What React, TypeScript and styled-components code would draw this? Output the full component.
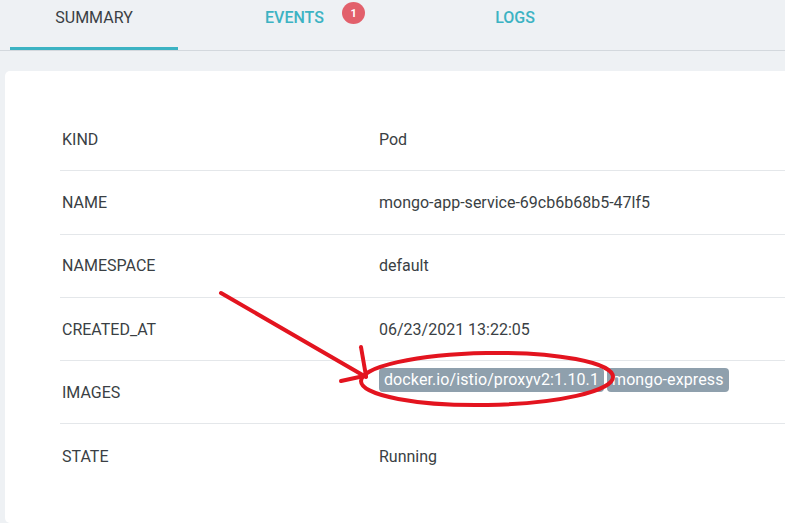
import React from "react";
import styled, { createGlobalStyle } from "styled-components";

const Global = createGlobalStyle`
  html, body {
    margin: 0;
    padding: 0;
    overflow: hidden;
    background: #eef1f4;
  }
  body {
    font-family: Roboto, "Noto Sans", "Liberation Sans", sans-serif;
    color: #3a3f44;
    width: 785px;
    height: 523px;
  }
`;

const Page = styled.div`
  position: relative;
  width: 785px;
  height: 523px;
  overflow: hidden;
  display: flex;
  flex-direction: column;
`;

const TabBar = styled.div`
  display: flex;
  height: 50px;
  padding-left: 10px;
  border-bottom: 1px solid #d3d8dd;
  flex-shrink: 0;
`;

const Tab = styled.div<{ $active?: boolean; $w: number }>`
  position: relative;
  width: ${(p) => p.$w}px;
  box-sizing: border-box;
  display: flex;
  justify-content: center;
  align-items: flex-start;
  padding-top: 8px;
  font-size: 16px;
  line-height: 19px;
  font-weight: ${(p) => (p.$active ? 400 : 500)};
  color: ${(p) => (p.$active ? "#3a3f44" : "#3cb3c3")};
  border-bottom: 3px solid ${(p) => (p.$active ? "#3cb3c3" : "transparent")};
`;

const TabLabel = styled.span`
  position: relative;
`;

const Badge = styled.span`
  position: absolute;
  left: 77px;
  top: -6px;
  width: 23px;
  height: 22px;
  border-radius: 50%;
  background: #e2606b;
  color: #fff;
  font-size: 11px;
  font-weight: 700;
  display: flex;
  align-items: center;
  justify-content: center;
`;

const Card = styled.div`
  margin: 20px -20px 0 5px;
  flex: 1;
  background: #ffffff;
  border-radius: 5px;
  padding: 37px 0 0 55px;
`;

const Row = styled.div<{ $last?: boolean }>`
  display: flex;
  align-items: center;
  height: 63.3px;
  box-sizing: border-box;
  border-bottom: ${(p) => (p.$last ? "none" : "1px solid #e4e7ea")};
  font-size: 16px;
  color: #3a3f44;
`;

const Label = styled.div`
  width: 317px;
  padding-left: 2px;
  flex-shrink: 0;
`;

const Value = styled.div``;

const ChipList = styled.div`
  display: flex;
  gap: 3px;
  padding-bottom: 25px;
`;

const Chip = styled.span`
  background: #8fa0ad;
  color: #ffffff;
  border-radius: 4px;
  padding: 0 5px;
  height: 24px;
  line-height: 24px;
  font-size: 16px;
  letter-spacing: 0.1px;
`;

const Annotation = styled.svg`
  position: absolute;
  left: 0;
  top: 0;
  pointer-events: none;
`;

const rows: { label: string; value: string }[] = [
  { label: "KIND", value: "Pod" },
  { label: "NAME", value: "mongo-app-service-69cb6b68b5-47lf5" },
  { label: "NAMESPACE", value: "default" },
  { label: "CREATED_AT", value: "06/23/2021 13:22:05" },
];

export default function App() {
  return (
    <Page>
      <Global />
      <TabBar>
        <Tab $active $w={168}>
          <TabLabel>SUMMARY</TabLabel>
        </Tab>
        <Tab $w={233}>
          <TabLabel>
            EVENTS
            <Badge>1</Badge>
          </TabLabel>
        </Tab>
        <Tab $w={208}>
          <TabLabel>LOGS</TabLabel>
        </Tab>
      </TabBar>
      <Card>
        {rows.map((r) => (
          <Row key={r.label}>
            <Label>{r.label}</Label>
            <Value>{r.value}</Value>
          </Row>
        ))}
        <Row>
          <Label>IMAGES</Label>
          <ChipList>
            <Chip>docker.io/istio/proxyv2:1.10.1</Chip>
            <Chip>mongo-express</Chip>
          </ChipList>
        </Row>
        <Row $last>
          <Label>STATE</Label>
          <Value>Running</Value>
        </Row>
      </Card>
      <Annotation width="785" height="523" viewBox="0 0 785 523">
        <g stroke="#e3141f" strokeWidth="4" fill="none" strokeLinecap="round">
          <line x1="221" y1="293" x2="366" y2="377" />
          <line x1="361" y1="347" x2="366" y2="376" />
          <line x1="341" y1="381" x2="364" y2="376" />
          <ellipse cx="487" cy="379" rx="126" ry="26" transform="rotate(-1 487 379)" />
        </g>
      </Annotation>
    </Page>
  );
}
